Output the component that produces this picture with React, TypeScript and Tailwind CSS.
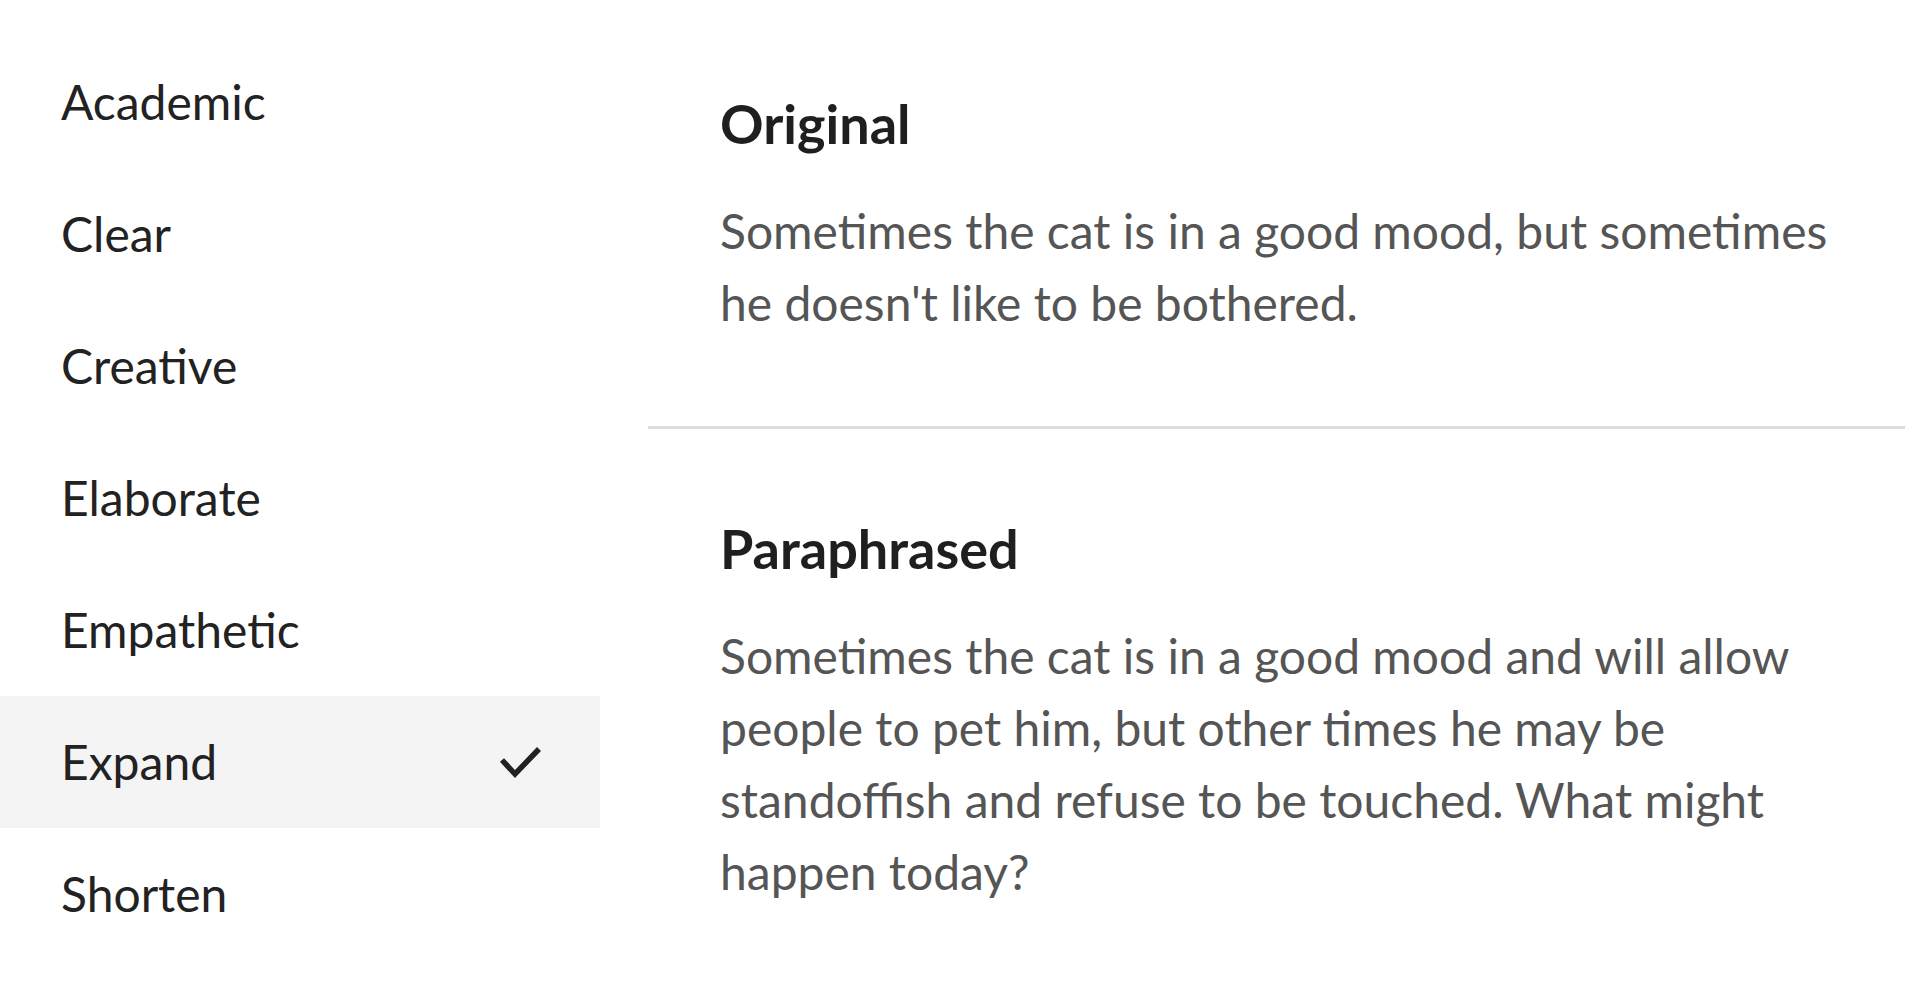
const modes = ['Academic', 'Clear', 'Creative', 'Elaborate', 'Empathetic', 'Expand', 'Shorten'];

function CheckMark() {
  return (
    <svg width="44" height="36" viewBox="0 0 44 36" fill="none" className="shrink-0">
      <polyline
        points="4,16 17,30 41,5"
        stroke="#222222"
        strokeWidth="5.5"
        strokeLinecap="butt"
        strokeLinejoin="miter"
      />
    </svg>
  );
}

export default function App() {
  const selected = 'Expand';

  return (
    <div
      className="flex h-[996px] w-[1905px] gap-12 overflow-hidden bg-white"
      style={{ fontFamily: 'Lato, "Open Sans", sans-serif' }}
    >
      <div className="flex w-[600px] shrink-0 flex-col rounded-[40px] bg-white py-[36px]">
        {modes.map((mode) => {
          const isSelected = mode === selected;
          return (
            <div
              key={mode}
              className={`flex h-[132px] items-center justify-between pl-[61px] pr-[58px] ${
                isSelected ? 'bg-[#f4f4f4]' : ''
              }`}
            >
              <span className="text-[48px] leading-none text-[#222222]">{mode}</span>
              {isSelected ? <CheckMark /> : null}
            </div>
          );
        })}
      </div>

      <div className="flex flex-1 flex-col rounded-[40px] bg-white">
        <section className="px-[72px] pb-[87px] pt-[95px]">
          <h2 className="text-[54px] font-bold leading-[58px] text-[#1f1f1f]">Original</h2>
          <p className="mt-[42px] max-w-[1130px] text-[48px] leading-[72px] text-[#555555]">
            Sometimes the cat is in a good mood, but sometimes he doesn't like to be bothered.
          </p>
        </section>
        <div className="h-[3px] bg-[#dcdcdc]" />
        <section className="px-[72px] pb-[80px] pt-[91px]">
          <h2 className="text-[54px] font-bold leading-[58px] text-[#1f1f1f]">Paraphrased</h2>
          <p className="mt-[42px] max-w-[1130px] text-[48px] leading-[72px] text-[#555555]">
            Sometimes the cat is in a good mood and will allow people to pet him, but other times he may be
            standoffish and refuse to be touched. What might happen today?
          </p>
        </section>
      </div>
    </div>
  );
}
